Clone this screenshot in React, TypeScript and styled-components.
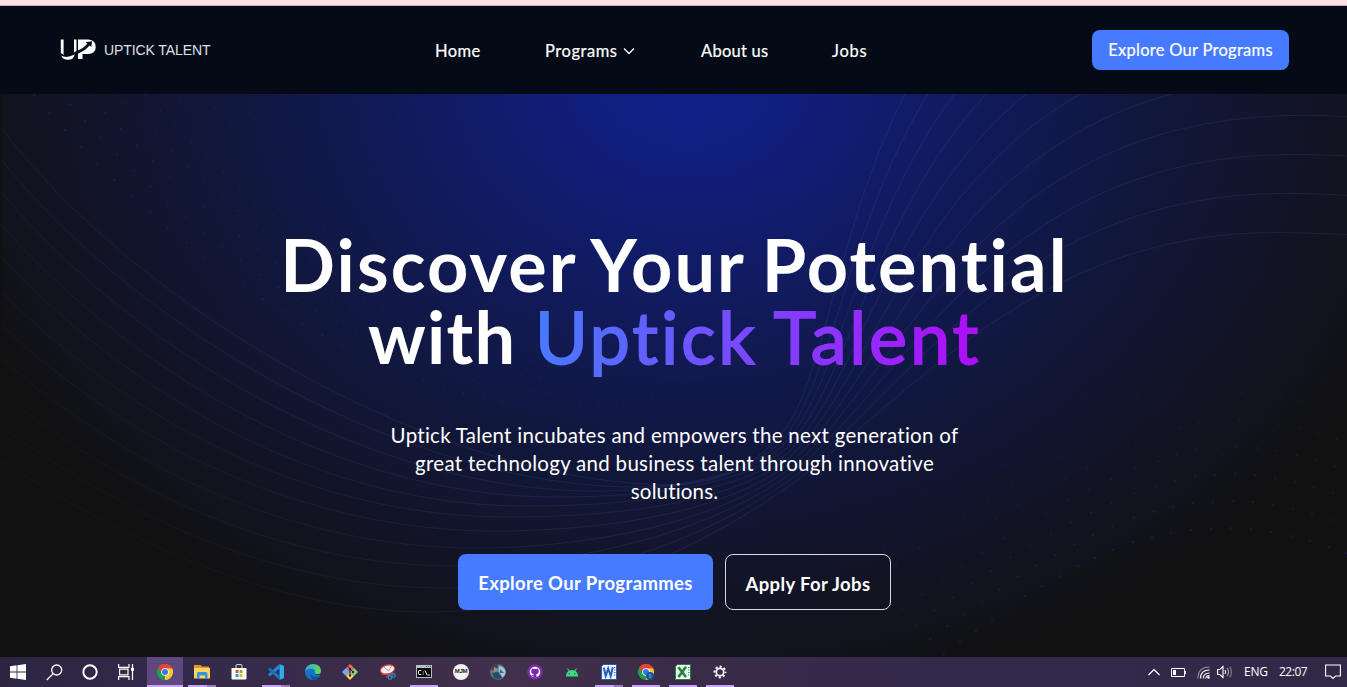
import React from 'react';
import styled, { createGlobalStyle } from 'styled-components';

const GlobalStyle = createGlobalStyle`
  *, *::before, *::after { box-sizing: border-box; }
  html, body { margin: 0; padding: 0; background: #111; }
  body { overflow: hidden; font-family: Lato, "Open Sans", sans-serif; color: #fff; font-variant-ligatures: none; }
`;

const Page = styled.div`
  width: 100%;
  height: 687px;
  display: flex;
  flex-direction: column;
`;

const BrowserEdge = styled.div`
  height: 6px;
  flex: none;
  background: #ffe0e6;
  border-bottom: 1px solid #c5b1b7;
`;

const Header = styled.header`
  height: 88px;
  flex: none;
  display: flex;
  align-items: center;
  padding: 0 58px 0 60px;
  background: #040b17;
`;

const Brand = styled.a`
  display: flex;
  align-items: center;
  gap: 8px;
  width: 375px;
`;

const BrandName = styled.span`
  font: 14px/20px "Liberation Sans", Arial, sans-serif;
  letter-spacing: -0.09px;
  color: #dfe1e4;
  white-space: nowrap;
`;

const Nav = styled.nav`
  display: flex;
  flex: 1;
  padding-top: 2px;
`;

const NavItem = styled.a<{ $width: number; $gap?: number; $track?: number }>`
  display: flex;
  align-items: center;
  gap: 5px;
  width: ${(p) => p.$width}px;
  margin-right: ${(p) => p.$gap ?? 64}px;
  font-size: 16.5px;
  line-height: 24px;
  letter-spacing: ${(p) => p.$track ?? 0}px;
  -webkit-text-stroke: 0.2px #fff;
  white-space: nowrap;
`;

const HeaderButton = styled.button`
  width: 197px;
  height: 40px;
  padding: 0;
  border: 0;
  border-radius: 8px;
  background: #467bff;
  color: #fff;
  font: 16.5px/24px Lato, sans-serif;
  letter-spacing: 0.28px;
  -webkit-text-stroke: 0.2px #fff;
  white-space: nowrap;
`;

const Hero = styled.main`
  position: relative;
  flex: 1;
  display: flex;
  flex-direction: column;
  align-items: center;
  overflow: hidden;
  padding-top: 134px;
  border-left: 2px solid #11120f;
  background: radial-gradient(ellipse 780px 640px at 51% -3%, #10208c 0%, #111e7b 15%, #111a58 39%, #11173a 61%, #121424 82%, #111111 100%) #111;
`;

const Backdrop = styled.svg`
  position: absolute;
  inset: 0 auto auto -2px;
  pointer-events: none;
`;

const Title = styled.h1`
  position: relative;
  margin: 0;
  font-size: 72px;
  line-height: 72px;
  font-weight: 700;
  text-align: center;
  white-space: nowrap;
`;

const TitleLine = styled.span<{ $track: number; $word?: number }>`
  display: block;
  letter-spacing: ${(p) => p.$track}px;
  word-spacing: ${(p) => p.$word ?? 0}px;
`;

const Accent = styled.span`
  font-weight: 400;
  letter-spacing: 2.8px;
  word-spacing: -3px;
  background: linear-gradient(90deg, #467bff 0%, #7250ff 40%, #b00cf8 100%);
  -webkit-background-clip: text;
  background-clip: text;
  color: transparent;
  -webkit-text-stroke: 1.8px transparent;
`;

const Lead = styled.p`
  position: relative;
  margin: 49px 0 0;
  width: 600px;
  text-align: center;
  font-size: 20.5px;
  line-height: 28px;
`;

const LeadLine = styled.span<{ $track: number }>`
  display: block;
  letter-spacing: ${(p) => p.$track}px;
`;

const Actions = styled.div`
  position: relative;
  display: flex;
  gap: 12px;
  margin-top: 49px;
`;

const ActionButton = styled.button<{ $primary?: boolean }>`
  width: ${(p) => (p.$primary ? 255 : 166)}px;
  height: 56px;
  padding: ${(p) => (p.$primary ? '2px' : '4px')} 0 0;
  border-radius: 8px;
  border: ${(p) => (p.$primary ? '0' : '1px solid #d9dae0')};
  background: ${(p) => (p.$primary ? '#467bff' : 'transparent')};
  color: #fff;
  font: 700 18.5px/28px Lato, sans-serif;
  letter-spacing: 0.36px;
  white-space: nowrap;
`;

const Taskbar = styled.footer`
  height: 30px;
  flex: none;
  display: flex;
  justify-content: space-between;
  background: linear-gradient(90deg, #2c2540 0%, #33294a 12%, #3b2d49 28%, #41304b 38%, #3a2c48 50%, #33294a 70%, #322948 100%);
`;

const TaskGroup = styled.div`
  display: flex;
`;

const SystemSlot = styled.div<{ $last?: boolean }>`
  width: ${(p) => (p.$last ? 39 : 36)}px;
  padding-right: ${(p) => (p.$last ? 3 : 0)}px;
  height: 30px;
  display: flex;
  align-items: center;
  justify-content: center;
`;

const AppSlot = styled.div<{ $active?: boolean }>`
  position: relative;
  width: 37px;
  height: 30px;
  display: flex;
  align-items: center;
  justify-content: center;
  &::before {
    content: '';
    position: absolute;
    inset: 0 1px 0 0;
    background: ${(p) => (p.$active ? '#5f477f' : 'transparent')};
  }
  svg { position: relative; margin-right: 1px; }
`;

const Underline = styled.i<{ $mode: 'full' | 'open' | 'stack' }>`
  position: absolute;
  bottom: 0;
  left: ${(p) => (p.$mode === 'full' ? 0 : 4)}px;
  width: ${(p) => (p.$mode === 'full' ? 36 : 28)}px;
  height: 2px;
  background: ${(p) => (p.$mode === 'stack' ? 'linear-gradient(90deg, #c8a2f7 0 19px, #9a7ebc 19px)' : '#c8a2f7')};
`;

const Tray = styled.div`
  display: flex;
  align-items: center;
  width: 199px;
  font: 12px/16px "Open Sans", "Noto Sans", sans-serif;
`;

const TrayCell = styled.div<{ $width: number; $track?: number }>`
  width: ${(p) => p.$width}px;
  display: flex;
  align-items: center;
  letter-spacing: ${(p) => p.$track ?? 0}px;
  white-space: nowrap;
`;

/* ---------- hero backdrop ---------- */

const startY = [129, 160.5, 193, 225.6, 258, 292.5, 325.8, 359.4, 393.8, 427, 460.7];
const lowX = [674, 636, 593, 555, 525, 507, 494, 475, 456, 443, 430];
const lowY = [485, 487, 491, 497, 506, 517, 531, 548, 566, 588, 612];
const mix = (a: number, b: number, t: number) => a + (b - a) * t;

const waves = startY.map((y, i) => {
  const t = i / 10;
  const lx = lowX[i];
  const ly = lowY[i];
  const peakX = mix(1369, 1276, t);
  const peakY = mix(-158, 232.5, t);
  return [
    `M2 ${y}`,
    `C${mix(140, 130, t)} ${y + mix(181, 84, t)} ${lx - mix(234, 150, t)} ${ly} ${lx} ${ly}`,
    `C${lx + mix(41, 130, t)} ${ly} ${mix(755, 700, t)} ${mix(465, 552, t)} ${mix(780, 800, t)} ${mix(436, 478, t)}`,
    `C${mix(870, 930, t)} ${mix(330, 375, t)} ${mix(820, 1050, t)} ${peakY} ${peakX} ${peakY}`,
    `Q${peakX + 40} ${peakY} 1400 ${peakY + 5}`,
  ].join(' ');
});

type Dot = { x: number; y: number; o: number; r: number };
const dots: Dot[] = [];

/* Dot field that rises towards the lower right corner. */
const ridge = [
  [944, 654], [960, 642], [976, 631], [992, 619], [1008, 608], [1025, 596], [1042, 586], [1060, 576],
  [1078, 566], [1095, 558], [1113, 550], [1133, 542], [1152, 537], [1171, 533], [1191, 530], [1211, 529],
  [1231, 528], [1251, 529], [1271, 532], [1291, 536], [1310, 541], [1329, 547], [1346, 553],
];
for (let row = 0; row < 9; row++) {
  ridge.forEach(([x, y], i) => {
    const step = mix(15, 27, Math.min(1, i / 14));
    dots.push({ x: x - row * mix(14, -2, Math.min(1, i / 12)), y: y - row * step, o: 0.85 - row * 0.08, r: 0.85 });
  });
}

/* Dot sheet that falls from the upper left and climbs back up past the title. */
for (let row = 0; row < 12; row++) {
  for (let i = 0; i < 52; i++) {
    const t = i / 51;
    const u = 1 - t;
    const x = u * u * u * (20 + row * 21) + 3 * u * u * t * (260 + row * 17) + 3 * u * t * t * (760 + row * 2) + t * t * t * (864 - row * 3);
    const y = u * u * u * (78 - row * 8) + 3 * u * u * t * (375 - row * 12) + 3 * u * t * t * (640 - row * 21) + t * t * t * (80 - row * 4);
    dots.push({ x, y, o: Math.max(0.15, 0.85 - row * 0.045 - t * 0.3), r: 0.85 });
  }
}

const HeroBackdrop = () => (
  <Backdrop width="1347" height="563" viewBox="0 94 1347 563" fill="none">
    <defs>
      <linearGradient id="wave" gradientUnits="userSpaceOnUse" x1="150" y1="560" x2="560" y2="180">
        <stop offset="0" stopColor="#4a5ba8" stopOpacity="0.06" />
        <stop offset="0.5" stopColor="#4a5ba8" stopOpacity="0.18" />
        <stop offset="1" stopColor="#5a6ab8" stopOpacity="0.15" />
      </linearGradient>
    </defs>
    {waves.map((d) => <path key={d} d={d} stroke="url(#wave)" />)}
    {dots.map((d, i) => <circle key={i} cx={d.x} cy={d.y} r={d.r} fill="#1420a0" opacity={d.o} />)}
  </Backdrop>
);

/* ---------- icons ---------- */

const LogoMark = () => (
  <svg width="36" height="22" viewBox="0 0 36 22" fill="#fff">
    <path d="M.8.5H3.600V14.500q0 1.200.8 1.800L.8 14Z" />
    <path d="M14 .5H16.500V12L14 13.500Z" />
    <path d="M1.200 16.500Q5 18.700 9 17.600Q12.500 16.500 14.800 15.200Q13.500 20.800 8 20.800Q2.600 20.800 1.200 16.500Z" />
    <path d="M18 .5H28.500Q35.700 1 35.700 8Q35.700 15 28 15H22.500V20H18V14.500Q25 12 29.500 6.500L31.300 8L32 2.200L25.500 3.300L27.400 4.800Q24 9 18 11.500Z" />
  </svg>
);

const Chrome = ({ badge }: { badge?: boolean }) => (
  <svg width="16" height="16" viewBox="0 0 16 16">
    <path d="M8 8 1.070 4A8 8 0 0 1 14.930 4Z" fill="#e94335" />
    <path d="M8 8 14.930 4A8 8 0 0 1 8 16Z" fill="#fcc934" />
    <path d="M8 8 8 16A8 8 0 0 1 1.070 4Z" fill="#1e9e4f" />
    <path d="M8 4.200H15L11 10.500 8 16 11.300 9.500Z" fill="#fcc934" />
    <path d="M1.070 4 4.700 10H8V4.200Z" fill="#1e9e4f" />
    <path d="M1.070 4Q3.500 0 8 0 12.500 0 14.930 4.200H8Q4.500 4.200 4.300 8Z" fill="#e94335" />
    <circle cx="8" cy="8" r="3.800" fill="#fff" />
    <circle cx="8" cy="8" r="3" fill="#3478e6" />
    {badge && (
      <g>
        <circle cx="12" cy="12" r="4" fill="#12539a" />
        <path d="M13 10.500h-1.800v1.500h1.600v1.600H11" fill="none" stroke="#7aa9d8" strokeWidth=".7" />
      </g>
    )}
  </svg>
);

const WindowsIcon = () => (
  <svg width="16" height="16" viewBox="0 0 16 16" fill="#fff">
    <path d="M0 2.200 6.600 1.300V7.600H0ZM7.400 1.200 16 0V7.600H7.400ZM0 8.400H6.600V14.700L0 13.800ZM7.400 8.400H16V16L7.400 14.800Z" />
  </svg>
);

const SearchIcon = () => (
  <svg width="17" height="17" viewBox="0 0 17 17" fill="none" stroke="#fff" strokeWidth="1.300">
    <circle cx="10.700" cy="6" r="5" />
    <path d="M7.200 9.600.8 16" />
  </svg>
);

const CortanaIcon = () => (
  <svg width="16" height="16" viewBox="0 0 16 16" fill="none" stroke="#fff" strokeWidth="1.900">
    <circle cx="8" cy="8" r="6.700" />
  </svg>
);

const TaskViewIcon = () => (
  <svg width="17" height="16" viewBox="0 0 17 16" fill="none" stroke="#fff" strokeWidth="1.200">
    <path d="M.6 0V3.400H11V0M.6 16V12.600H11V16M1.600 5.200H10V10.800H1.600ZM14.500 0V16" />
    <path d="M13 3.800h3v3h-3z" fill="#fff" stroke="none" />
  </svg>
);

const ExplorerIcon = () => (
  <svg width="16" height="14" viewBox="0 0 16 14">
    <path d="M0 0H6.500L8 1.500H15V4H0Z" fill="#dd9b20" />
    <path d="M0 3H16V13.500H0Z" fill="#ffd363" />
    <path d="M3 14V8.500Q3 7 4.500 7H12Q13.500 7 13.500 8.500V14H11V10.500H5.500V14Z" fill="#3295dc" />
  </svg>
);

const StoreIcon = () => (
  <svg width="16" height="16" viewBox="0 0 16 16">
    <path d="M5 4V1.600Q5 .6 6 .6H10Q11 .6 11 1.600V4" fill="none" stroke="#ddd" />
    <path d="M.5 4H15.500V14.500Q15.500 15.500 14.500 15.500H1.500Q.5 15.500.5 14.500Z" fill="#fff" />
    <path d="M4.500 6H7.500V9H4.500Z" fill="#f15325" />
    <path d="M8.500 6H11.500V9H8.500Z" fill="#7bb928" />
    <path d="M4.500 10H7.500V13H4.500Z" fill="#16a2ea" />
    <path d="M8.500 10H11.500V13H8.500Z" fill="#fdb913" />
  </svg>
);

const CodeIcon = () => (
  <svg width="16" height="16" viewBox="0 0 16 16">
    <path d="M11.500 0 16 2V14L11.500 16 11.500 11.500V4.500Z" fill="#32a8f0" />
    <path d="M11.500 0V4.500L2 12.200.2 11V10.200Z" fill="#1d8bd6" />
    <path d="M11.500 16V11.500L2 3.800.2 5V5.800Z" fill="#1275bd" />
  </svg>
);

const EdgeIcon = () => (
  <svg width="16" height="16" viewBox="0 0 16 16">
    <defs>
      <linearGradient id="edgeTop" x1="0" y1="0" x2="1" y2=".4">
        <stop offset="0" stopColor="#2ea7e0" />
        <stop offset="1" stopColor="#64d65a" />
      </linearGradient>
    </defs>
    <circle cx="8" cy="8" r="8" fill="#1673cc" />
    <path d="M0 7.500Q1 0 8.500 0 16 .7 16 7 15.500 10.500 11.500 10.300 9 10 10 8.300 10.500 5 6.500 4.500 2 4.500 0 7.500Z" fill="url(#edgeTop)" />
    <path d="M5.200 8Q5 13.500 14.500 12.600 12 16 8 16 5.200 14 5.200 8Z" fill="#134f9e" />
    <path d="M9.500 9.500Q10 12 16 10.500L15.500 9.500Q13 11 9.500 9.500Z" fill="#3a2c48" />
  </svg>
);

const GitIcon = () => (
  <svg width="16" height="16" viewBox="0 0 16 16">
    <path d="M8 0 12 4 8 8 4 4Z" fill="#f06a62" />
    <path d="M12 4 16 8 12 12 8 8Z" fill="#8fce7d" />
    <path d="M4 4 8 8 4 12 0 8Z" fill="#73a7ee" />
    <path d="M8 8 12 12 8 16 4 12Z" fill="#f7d354" />
    <path d="M5.500 2 11 8M8 5V12" stroke="#29212c" strokeWidth="1" />
    <circle cx="8" cy="5" r="1.200" fill="#29212c" />
    <circle cx="11" cy="8" r="1.200" fill="#29212c" />
    <circle cx="8" cy="11.500" r="1.200" fill="#29212c" />
  </svg>
);

const SnipIcon = () => (
  <svg width="17" height="16" viewBox="0 0 17 16">
    <ellipse cx="8.500" cy="5.500" rx="7.300" ry="4.500" fill="#f2eeee" stroke="#cf3a3e" strokeWidth="1.200" transform="rotate(-14 8.500 5.500)" />
    <path d="M5 3 9.500 7 12.500 2" fill="none" stroke="#a7a2a8" />
    <path d="M3 10.500 11 10M7 13 14 8.500" stroke="#c94a4a" strokeWidth="1.200" />
    <circle cx="11" cy="13.600" r="1.700" fill="none" stroke="#2585c5" strokeWidth="1.400" />
    <circle cx="14.500" cy="11.500" r="1.700" fill="none" stroke="#2585c5" strokeWidth="1.400" />
  </svg>
);

const TerminalIcon = () => (
  <svg width="16" height="14" viewBox="0 0 16 14">
    <path d="M0 0H16V13H0Z" fill="#b7bdc4" />
    <path d="M1 3H15V12H1Z" fill="#050505" />
    <path d="M10 1h1v1h-1zM12 1h1v1h-1zM14 1h1v1h-1z" fill="#3b5f96" />
    <path d="M5.300 5.500H3.200Q2.500 5.500 2.500 6.200V8.800Q2.500 9.500 3.200 9.500H5.300M7.200 6.500v1M7.200 8.600v1M9 5.500 11 9.800M11.500 10H13.800" fill="none" stroke="#fff" />
  </svg>
);

const BadgeCircle = styled.div`
  position: relative;
  width: 16px;
  height: 16px;
  margin-right: 1px;
  border-radius: 50%;
  background: #f3f1f2;
  color: #222;
  font: 700 6px/15px "Liberation Sans", sans-serif;
  text-align: center;
  letter-spacing: -0.3px;
`;

const PhotoIcon = () => (
  <svg width="16" height="16" viewBox="0 0 16 16">
    <circle cx="8" cy="8" r="7.800" fill="#5b7d92" />
    <path d="M1 5Q4 0 8 .3L7 5 3 7Z" fill="#2f4254" />
    <path d="M9 2Q15 3 15.700 8 15.300 12 12.500 13.500L8.500 7Z" fill="#a9c6d5" />
    <path d="M4 3 7.500 4.500 6 8 3.500 7Z" fill="#b98272" />
    <path d="M2 9 8 8 12 13.500Q8 16.500 4 14Z" fill="#2c4a63" />
    <path d="M10 5 14 9 10 9Z" fill="#2b6a92" />
  </svg>
);

const GithubIcon = () => (
  <svg width="16" height="16" viewBox="0 0 16 16">
    <circle cx="8" cy="8" r="7.800" fill="#7a2aa6" />
    <circle cx="8" cy="8" r="5.300" fill="#fff" />
    <path d="M4.800 4.300 6.300 5Q8 4.600 9.700 5L11.200 4.300 11.400 6Q12.200 7.300 11.500 8.800 10.900 10 9.200 10.200 9.700 10.800 9.600 13.600H6.400V12.200Q4.700 12.300 4.200 10.900 5.200 11.300 6.400 11.200L6.700 10.200Q5.100 10 4.500 8.800 3.800 7.300 4.600 6Z" fill="#7a2aa6" />
  </svg>
);

const AndroidIcon = () => (
  <svg width="14" height="10" viewBox="0 0 14 10">
    <path d="M1 9.500Q1.300 3 7 3 12.700 3 13 9.500Z" fill="#3ddc84" />
    <path d="M4 4 2.700 1.500M10 4 11.300 1.500" stroke="#3ddc84" />
    <circle cx="4.200" cy="6.800" r=".7" fill="#234b3a" />
    <circle cx="9.800" cy="6.800" r=".7" fill="#234b3a" />
  </svg>
);

const OfficeIcon = ({ kind }: { kind: 'word' | 'excel' }) => {
  const color = kind === 'word' ? '#1f5db8' : '#238043';
  return (
    <svg width="16" height="16" viewBox="0 0 16 16">
      <path d="M2.500.5H15.500V15.500H.5V2.500Z" fill="#fff" stroke={color} />
      <path d="M13 3.500H14.500M13 6H14.500M13 8.500H14.500M13 11H14.500" stroke={color} strokeWidth=".9" />
      <path d="M1.500 2.800 12.500 1.500V14.500L1.500 13.500Z" fill={kind === 'word' ? '#e2ecfa' : '#dcf0df'} />
      {kind === 'word'
        ? <path d="M2.800 3.600 4.700 12 7.200 4.500 9.700 12 11.800 3.300" fill="none" stroke={color} strokeWidth="1.900" />
        : <path d="M3.400 3.200 11 13M11 2.800 3.400 13" fill="none" stroke={color} strokeWidth="2.500" />}
    </svg>
  );
};

const GearIcon = () => (
  <svg width="14" height="14" viewBox="0 0 14 14" fill="none" stroke="#fff">
    <circle cx="7" cy="7" r="3.700" strokeWidth="1.700" />
    <circle cx="7" cy="7" r="5.400" strokeWidth="2" strokeDasharray="2.120 2.120" strokeDashoffset="1.060" />
  </svg>
);

const apps: { id: string; icon: React.ReactNode; line?: 'full' | 'open' | 'stack'; active?: boolean }[] = [
  { id: 'chrome', icon: <Chrome />, line: 'full', active: true },
  { id: 'files', icon: <ExplorerIcon />, line: 'stack' },
  { id: 'store', icon: <StoreIcon /> },
  { id: 'code', icon: <CodeIcon />, line: 'stack' },
  { id: 'edge', icon: <EdgeIcon /> },
  { id: 'git', icon: <GitIcon /> },
  { id: 'snip', icon: <SnipIcon /> },
  { id: 'terminal', icon: <TerminalIcon />, line: 'open' },
  { id: 'mjm', icon: <BadgeCircle>MJM</BadgeCircle> },
  { id: 'photo', icon: <PhotoIcon /> },
  { id: 'github', icon: <GithubIcon /> },
  { id: 'android', icon: <AndroidIcon /> },
  { id: 'word', icon: <OfficeIcon kind="word" />, line: 'stack' },
  { id: 'chrome-profile', icon: <Chrome badge />, line: 'open' },
  { id: 'excel', icon: <OfficeIcon kind="excel" />, line: 'open' },
  { id: 'settings', icon: <GearIcon />, line: 'open' },
];

export default function App() {
  return (
    <Page>
      <GlobalStyle />
      <BrowserEdge />
      <Header>
        <Brand>
          <LogoMark />
          <BrandName>UPTICK TALENT</BrandName>
        </Brand>
        <Nav>
          <NavItem $width={46} $track={0.45}>Home</NavItem>
          <NavItem $width={92} $track={0.55}>
            Programs
            <svg width="12" height="8" viewBox="0 0 12 8" fill="none" stroke="#fff" strokeWidth="1.300">
              <path d="M1 1.500 6 6.500 11 1.500" />
            </svg>
          </NavItem>
          <NavItem $width={67} $track={0.25}>About us</NavItem>
          <NavItem $width={36} $track={0.75}>Jobs</NavItem>
        </Nav>
        <HeaderButton>Explore Our Programs</HeaderButton>
      </Header>
      <Hero>
        <HeroBackdrop />
        <Title>
          <TitleLine $track={2.1} $word={-2.5}>Discover Your Potential</TitleLine>
          <TitleLine $track={1.2}>with <Accent>Uptick Talent</Accent></TitleLine>
        </Title>
        <Lead>
          <LeadLine $track={0.28}>Uptick Talent incubates and empowers the next generation of</LeadLine>
          <LeadLine $track={0.3}>great technology and business talent through innovative</LeadLine>
          <LeadLine $track={0.15}>solutions.</LeadLine>
        </Lead>
        <Actions>
          <ActionButton $primary>Explore Our Programmes</ActionButton>
          <ActionButton>Apply For Jobs</ActionButton>
        </Actions>
      </Hero>
      <Taskbar>
        <TaskGroup>
          <SystemSlot><WindowsIcon /></SystemSlot>
          <SystemSlot><SearchIcon /></SystemSlot>
          <SystemSlot><CortanaIcon /></SystemSlot>
          <SystemSlot $last><TaskViewIcon /></SystemSlot>
          {apps.map((a) => (
            <AppSlot key={a.id} $active={a.active}>
              {a.icon}
              {a.line && <Underline $mode={a.line} />}
            </AppSlot>
          ))}
        </TaskGroup>
        <Tray>
          <TrayCell $width={23}>
            <svg width="12" height="8" viewBox="0 0 12 8" fill="none" stroke="#fff" strokeWidth="1.200"><path d="M.5 7 6 1.500 11.500 7" /></svg>
          </TrayCell>
          <TrayCell $width={26}>
            <svg width="15" height="9" viewBox="0 0 15 9" fill="none" stroke="#fff"><path d="M.5.5H13.500V8.500H.5ZM14.500 3V6" /><path d="M2 2H5V7H2Z" fill="#fff" stroke="none" /></svg>
          </TrayCell>
          <TrayCell $width={20}>
            <svg width="13" height="13" viewBox="0 0 13 13" fill="none" stroke="#fff" strokeWidth="1.100">
              <path d="M1 12.500Q1 1 12.500 1" opacity=".5" /><path d="M3.500 12.500Q3.500 4 12.500 4" /><path d="M6.200 12.500Q6.500 7 12.500 7" /><path d="M8.700 12.500Q9 9.700 12.500 9.500" />
              <circle cx="11.500" cy="11.500" r="1.200" fill="#fff" stroke="none" />
            </svg>
          </TrayCell>
          <TrayCell $width={27}>
            <svg width="16" height="14" viewBox="0 0 16 14" fill="none" stroke="#fff" strokeWidth="1.100">
              <path d="M.6 4.500H2.800L6 1.500V12.500L2.800 9.500H.6Z" /><path d="M8 5Q9.300 7 8 9" /><path d="M10.300 3Q12.800 7 10.300 11" opacity=".6" /><path d="M12.800 1.500Q16 7 12.800 12.500" opacity=".4" />
            </svg>
          </TrayCell>
          <TrayCell $width={35} $track={-0.25}>ENG</TrayCell>
          <TrayCell $width={46} $track={-0.5}>22:07</TrayCell>
          <TrayCell $width={16}>
            <svg width="16" height="16" viewBox="0 0 16 16" fill="none" stroke="#fff" strokeWidth="1.100"><path d="M.6 1H15.400V12H10.500L8 14.500 5.500 12H.6Z" /></svg>
          </TrayCell>
        </Tray>
      </Taskbar>
    </Page>
  );
}
